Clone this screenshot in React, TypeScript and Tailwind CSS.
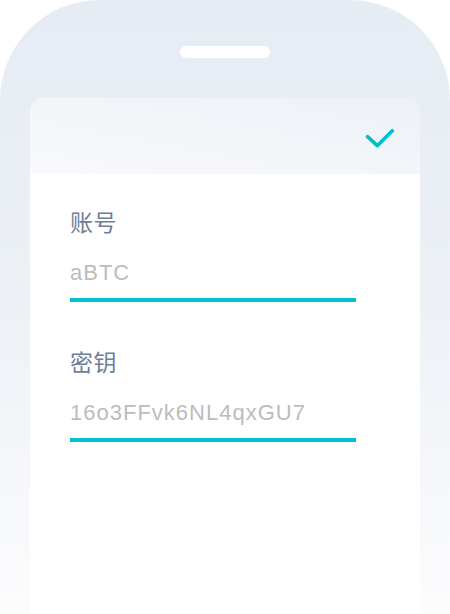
import React from "react";

const font = { fontFamily: '"Liberation Sans", "Noto Sans CJK SC", sans-serif' };

function Field({ label, value }: { label: string; value: string }) {
  return (
    <div className="flex flex-col">
      <div className="h-[30px] leading-[30px] text-[23px] tracking-[0.5px] text-[#6e7e97]">{label}</div>
      <div className="mt-5 h-[30px] leading-[30px] text-[22px] tracking-[1px] text-[#bcbcbc]">{value}</div>
      <div className="mt-[10px] h-[4px] w-[286px] bg-[#00c2d0]" />
    </div>
  );
}

export default function App() {
  return (
    <div className="w-[450px] h-[614px] bg-white overflow-hidden" style={font}>
      <div className="h-[614px] rounded-t-[100px] bg-gradient-to-b from-[#e6ecf4] via-[#edf1f6] to-[#fcfcfd] pt-[46px] flex flex-col">
        <div className="mx-auto h-[12px] w-[90px] rounded-full bg-white" />
        <div className="mt-[40px] mx-[30px] flex-1 rounded-t-[14px] overflow-hidden bg-white flex flex-col">
          <div className="h-[76px] bg-gradient-to-tr from-[#f8f9fc] to-[#edf1f6] flex justify-end pt-[29px] pr-[25px]">
            <svg width="30" height="22" viewBox="0 0 30 22" fill="none">
              <path
                d="M2.5 9.7 L12.3 18.7 L27.3 3.7"
                stroke="#00c0cf"
                strokeWidth="3.6"
                strokeLinecap="round"
                strokeLinejoin="round"
              />
            </svg>
          </div>
          <div className="flex flex-col pl-[40px] pt-[34px] gap-[46px]">
            <Field label="账号" value="aBTC" />
            <Field label="密钥" value="16o3FFvk6NL4qxGU7" />
          </div>
        </div>
      </div>
    </div>
  );
}
